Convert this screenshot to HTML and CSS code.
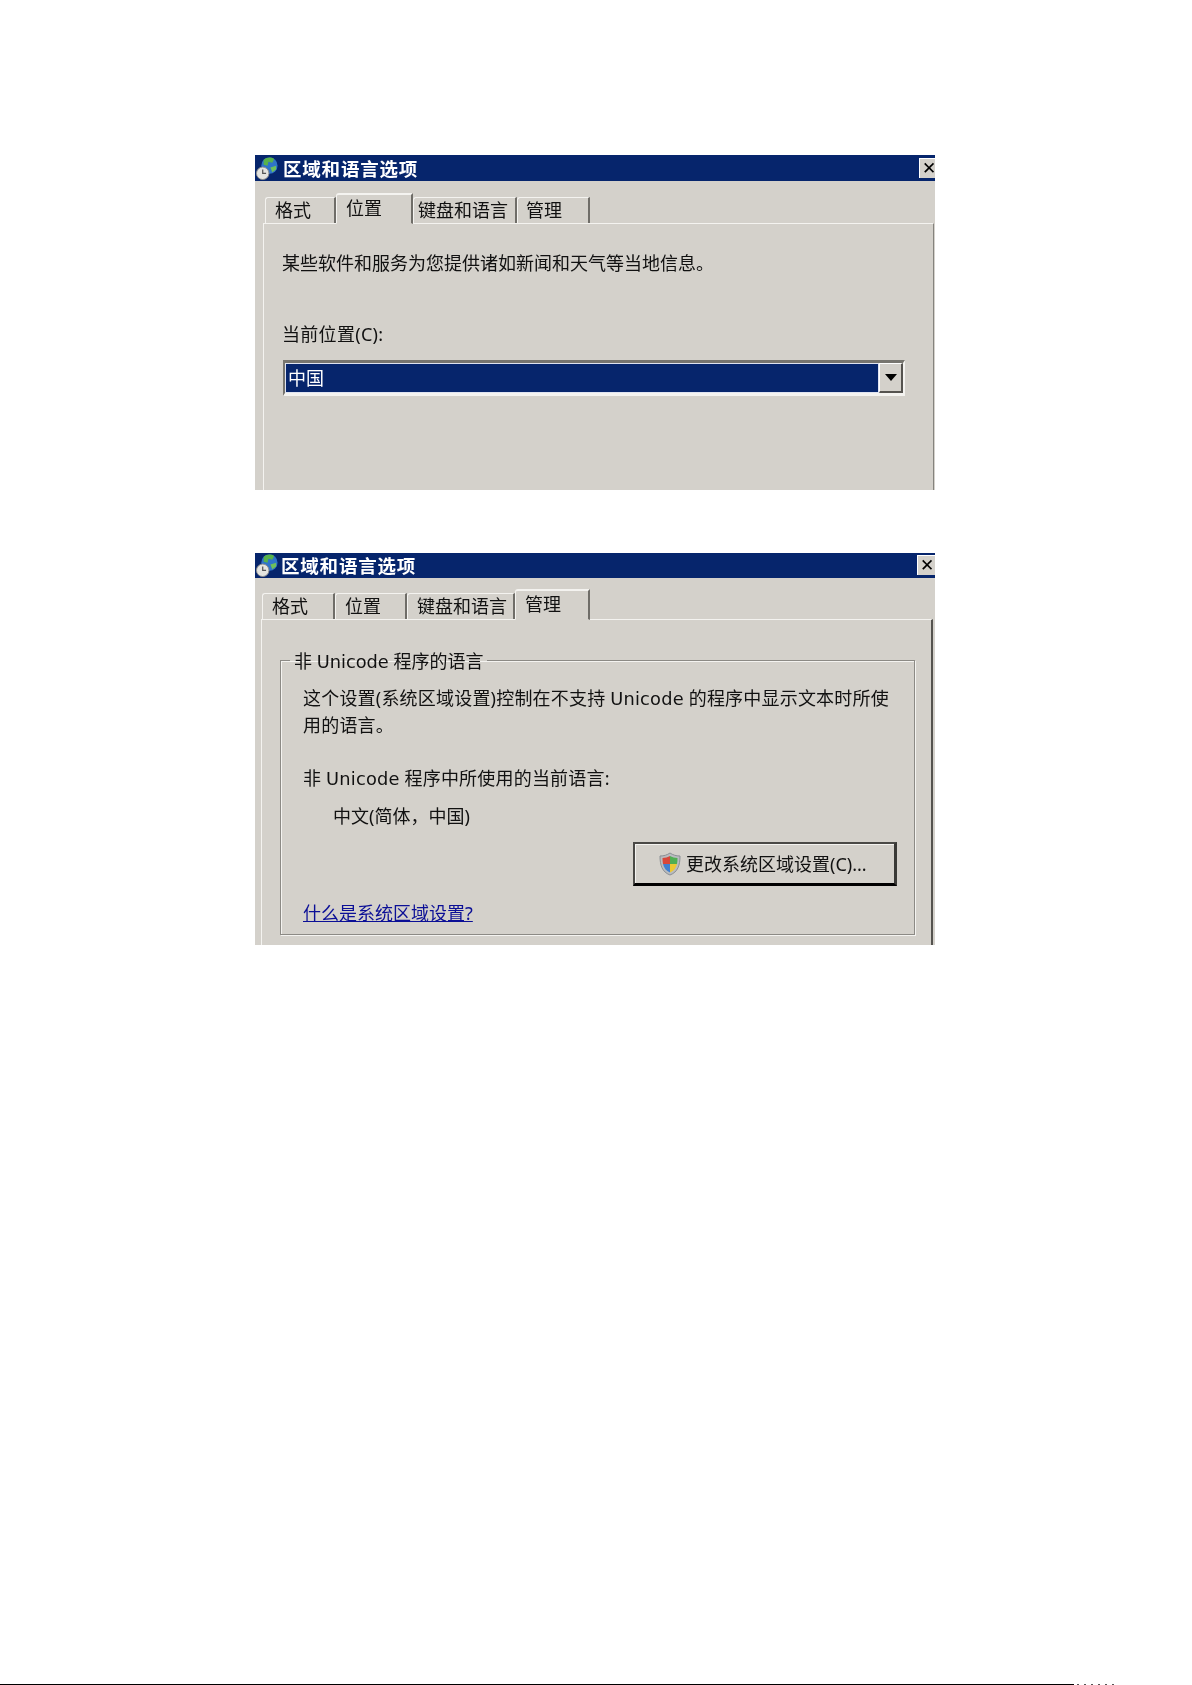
FILE: index.html
```html
<!DOCTYPE html>
<html lang="zh-CN">
<head>
    <meta charset="UTF-8">
    <title>区域和语言选项</title>
    <link rel="stylesheet" href="styles.css">
</head>
<body>
    <div class="dialog dialog-location">
        <div class="titlebar">
            <svg class="app-icon" viewBox="0 0 24 24">
                <circle cx="14" cy="9" r="8.5" fill="#2f74c9"/>
                <path d="M8 3 C11 0 16 0 19 2 L17 6 L13 5 L12 9 L8 8 Z" fill="#58b24a"/>
                <path d="M15 11 L21 9 L21 13 L17 16 Z" fill="#6fc05a"/>
                <circle cx="7" cy="17" r="6.5" fill="#e4e4e0" stroke="#8d8d8d"/>
                <path d="M7 13 V17 H10.5" fill="none" stroke="#555" stroke-width="1.3"/>
            </svg>
            <span class="title-text">区域和语言选项</span>
            <span class="close-btn">✕</span>
        </div>
        <div class="tabs">
            <div class="tab tab-format">格式</div>
            <div class="tab tab-place active">位置</div>
            <div class="tab tab-keyboard">键盘和语言</div>
            <div class="tab tab-admin">管理</div>
        </div>
        <div class="panel">
            <p class="intro">某些软件和服务为您提供诸如新闻和天气等当地信息。</p>
            <label class="field-label">当前位置(C):</label>
            <div class="combo">
                <div class="combo-value">中国</div>
                <div class="combo-btn"><span class="arrow"></span></div>
            </div>
        </div>
    </div>

    <div class="dialog dialog-admin">
        <div class="titlebar">
            <svg class="app-icon" viewBox="0 0 24 24">
                <circle cx="14" cy="9" r="8.5" fill="#2f74c9"/>
                <path d="M8 3 C11 0 16 0 19 2 L17 6 L13 5 L12 9 L8 8 Z" fill="#58b24a"/>
                <path d="M15 11 L21 9 L21 13 L17 16 Z" fill="#6fc05a"/>
                <circle cx="7" cy="17" r="6.5" fill="#e4e4e0" stroke="#8d8d8d"/>
                <path d="M7 13 V17 H10.5" fill="none" stroke="#555" stroke-width="1.3"/>
            </svg>
            <span class="title-text">区域和语言选项</span>
            <span class="close-btn">✕</span>
        </div>
        <div class="tabs">
            <div class="tab tab-format">格式</div>
            <div class="tab tab-place">位置</div>
            <div class="tab tab-keyboard">键盘和语言</div>
            <div class="tab tab-admin active">管理</div>
        </div>
        <div class="panel">
            <fieldset class="group">
                <legend>非 <span class="latin">Unicode</span> 程序的语言</legend>
                <p class="group-text">这个设置(系统区域设置)控制在不支持 <span class="latin">Unicode</span> 的程序中显示文本时所使用的语言。</p>
                <p class="current-label">非 <span class="latin">Unicode</span> 程序中所使用的当前语言:</p>
                <p class="current-value">中文(简体，中国)</p>
                <div class="btn-row">
                    <button class="change-btn" type="button">
                        <svg class="shield" viewBox="0 0 22 24">
                            <path d="M11 1 C14 3 17 4 21 4 C21 13 19 20 11 23 C3 20 1 13 1 4 C5 4 8 3 11 1 Z" fill="#b9bcc0" stroke="#8b8f94"/>
                            <path d="M11 4 C9 5 6 6 3.5 6 C3.5 8 3.6 10 4 12 H11 Z" fill="#d8473a"/>
                            <path d="M11 4 C13 5 16 6 18.500 6 C18.500 8 18.400 10 18 12 H11 Z" fill="#4fae52"/>
                            <path d="M4 12 H11 V20.500 C7 19 5 16 4 12 Z" fill="#3f7fd0"/>
                            <path d="M18 12 H11 V20.500 C15 19 17 16 18 12 Z" fill="#ecc832"/>
                        </svg>
                        更改系统区域设置(C)...
                    </button>
                </div>
                <a class="help-link" href="#">什么是系统区域设置?</a>
            </fieldset>
        </div>
    </div>

    <div class="page-foot">
        <div class="foot-rule"></div>
        <div class="foot-marks"></div>
    </div>
</body>
</html>
```

FILE: styles.css
```css
:root {
    --face: #d4d1cb;
    --navy: #06256c;
    --edge: #6f6d68;
}

* {
    margin: 0;
    padding: 0;
    box-sizing: border-box;
}

body {
    font-family: "Noto Sans", "Noto Sans CJK SC", sans-serif;
    font-size: 18px;
    line-height: 24px;
    color: #111;
    background: #fff;
    height: 1685px;
    padding: 155px 0 0 0;
    display: flex;
    flex-direction: column;
    overflow: hidden;
}

.latin {
    font-family: "DejaVu Sans", sans-serif;
    font-size: 17.8px;
}

.dialog {
    width: 680px;
    margin-left: 255px;
    background: var(--face);
    display: flex;
    flex-direction: column;
    overflow: hidden;
    filter: blur(0.35px);
    flex: none;
}

.dialog-location {
    height: 335px;
}

.dialog-admin {
    height: 392px;
    margin-top: 63px;
}

/* title bar */
.titlebar {
    background: var(--navy);
    color: #fff;
    display: flex;
    align-items: center;
    font-family: "Noto Sans CJK SC", sans-serif;
    font-weight: 700;
    font-size: 18.5px;
    line-height: 24px;
    letter-spacing: 0.8px;
    flex: none;
    padding-left: 1px;
}

.dialog-location .titlebar {
    height: 26px;
}

.dialog-admin .titlebar {
    height: 25px;
    padding-bottom: 1px;
}

.app-icon {
    width: 23px;
    height: 25px;
    flex: none;
}

.dialog-location .title-text {
    margin-left: 4px;
}

.dialog-admin .title-text {
    margin-left: 2px;
}

.close-btn {
    margin-left: auto;
    height: 20px;
    background: var(--face);
    border-top: 1px solid #fff;
    border-left: 1px solid #fff;
    color: #000;
    font-family: "DejaVu Sans", sans-serif;
    font-size: 17px;
    font-weight: 700;
    line-height: 19px;
    letter-spacing: 0;
    overflow: hidden;
}

.dialog-location .close-btn {
    width: 16px;
    padding-left: 2px;
}

.dialog-admin .close-btn {
    width: 18px;
    padding-left: 2px;
}

/* tabs */
.tabs {
    display: flex;
    align-items: flex-end;
    flex: none;
    position: relative;
    z-index: 1;
}

.dialog-location .tabs {
    height: 42px;
    padding-left: 10px;
}

.dialog-admin .tabs {
    height: 41px;
    padding-left: 7px;
}

.tab {
    height: 26px;
    border-top: 1px solid #f4f3f0;
    border-left: 1px solid #f4f3f0;
    border-right: 2px solid var(--edge);
    border-top-left-radius: 3px;
    padding-left: 9px;
    line-height: 25px;
    white-space: nowrap;
}

.tab.active {
    height: 31px;
    line-height: 26px;
    border-top: 2px solid #f4f3f0;
    border-bottom: 1px solid var(--face);
    margin-bottom: -1px;
}

.dialog-location .tab-format { width: 71px; }
.dialog-location .tab-place { width: 77px; }
.dialog-location .tab-keyboard { width: 104px; padding-left: 4px; }
.dialog-location .tab-admin { width: 73px; padding-left: 8px; }

.dialog-admin .tab-format { width: 73px; }
.dialog-admin .tab-place { width: 72px; }
.dialog-admin .tab-keyboard { width: 108px; }
.dialog-admin .tab-admin { width: 75px; }

/* tab page */
.panel {
    flex: 1;
    border-top: 1px solid #f4f3f0;
    border-left: 1px solid #f4f3f0;
}

.dialog-location .panel {
    margin-left: 8px;
    margin-right: 1px;
    border-right: 1px solid #85837e;
    padding: 27px 0 0 18px;
}

.dialog-admin .panel {
    margin-left: 6px;
    margin-right: 2px;
    border-right: 2px solid #55534f;
    padding: 26px 0 0 18px;
}

.field-label {
    display: block;
    margin-top: 47px;
    letter-spacing: 0.3px;
}

.combo {
    display: flex;
    width: 622px;
    height: 36px;
    margin: 14px 0 0 1px;
    border-top: 3px solid #77756f;
    border-left: 2px solid #77756f;
    border-right: 2px solid #f4f3f0;
    border-bottom: 3px solid #f4f3f0;
}

.combo-value {
    flex: 1;
    background: var(--navy);
    color: #fff;
    border: 1px solid #dfe3f0;
    padding-left: 2px;
    line-height: 28px;
}

.combo-btn {
    width: 24px;
    background: var(--face);
    border-top: 1px solid #fff;
    border-left: 1px solid #fff;
    border-right: 2px solid #55534f;
    border-bottom: 2px solid #55534f;
    display: flex;
    align-items: center;
    justify-content: center;
}

.arrow {
    width: 0;
    height: 0;
    border-left: 6px solid transparent;
    border-right: 6px solid transparent;
    border-top: 7px solid #000;
}

/* group box */
.group {
    width: 635px;
    height: 289px;
    border: 1px solid #8c8a85;
    box-shadow: inset 1px 1px 0 #f4f3f0, 1px 1px 0 #f4f3f0;
    padding: 0 0 0 22px;
}

.group legend {
    margin-left: -13px;
    padding: 3px 4px 0;
}

.group-text {
    width: 592px;
    margin-top: 11px;
    line-height: 26.1px;
    letter-spacing: 0.2px;
}

.current-label {
    margin-top: 28px;
    letter-spacing: 0.2px;
}

.current-value {
    margin: 13px 0 0 30px;
}

.btn-row {
    display: flex;
    justify-content: flex-end;
    margin: 14px 17px 0 0;
}

.change-btn {
    width: 264px;
    height: 44px;
    background: var(--face);
    border: none;
    border-top: 2px solid #4a4946;
    border-left: 2px solid #4a4946;
    border-right: 3px solid #3a3936;
    border-bottom: 3px solid #000;
    box-shadow: inset 1px 1px 0 #f4f3f0;
    display: flex;
    align-items: center;
    padding-left: 24px;
    gap: 5px;
    font: inherit;
    color: inherit;
}

.shield {
    width: 22px;
    height: 24px;
    flex: none;
}

.help-link {
    display: block;
    margin-top: 15px;
    color: #0b0f96;
    text-decoration: underline;
}

/* stray rule at the very bottom of the page */
.page-foot {
    display: flex;
    height: 1px;
    margin-top: auto;
    flex: none;
}

.foot-rule {
    width: 1074px;
    background: #000;
}

.foot-marks {
    width: 38px;
    margin-left: 3px;
    background: repeating-linear-gradient(90deg, #555 0 2px, transparent 2px 7px);
}
```
